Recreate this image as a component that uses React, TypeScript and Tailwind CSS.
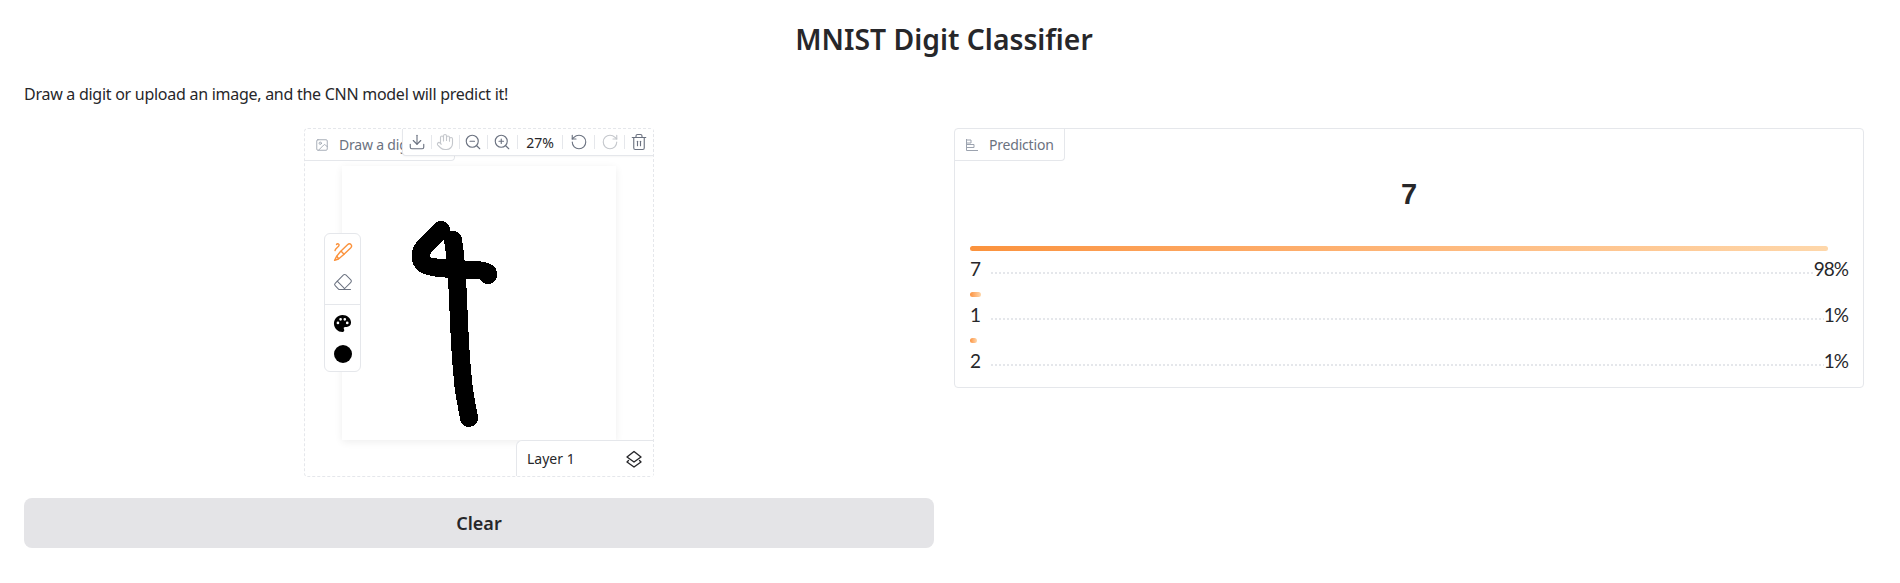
import { Download, Eraser, Hand, Image, RotateCcw, RotateCw, Trash2, ZoomIn, ZoomOut } from 'lucide-react'

const FONT = "font-['Noto_Sans',sans-serif]"

const predictions = [
  { label: '7', percent: '98%', barWidth: 858 },
  { label: '1', percent: '1%', barWidth: 11 },
  { label: '2', percent: '1%', barWidth: 7 },
]

function BrushIcon() {
  return (
    <svg viewBox="0 0 20 20" className="h-[20px] w-[20px]" fill="none" stroke="#fb923c" strokeWidth="1.4" strokeLinecap="round" strokeLinejoin="round">
      <path d="M3.5 2.5 C4.5 1 6.5 2 6 3.5 C5.5 5 2.5 6.5 2 8.5" />
      <path d="M8 9 L14.5 2.8 C15.8 1.6 17.2 1.8 18 2.6 C18.8 3.5 18.8 4.8 17.6 6 L11 12.2 Z" />
      <path d="M7.5 9.5 L3.5 14.5 L1.6 18.4 L5.5 17 L10.8 12.5" />
      <path d="M4 14.5 L5.5 16.5" />
    </svg>
  )
}

function PaletteIcon() {
  return (
    <svg viewBox="0 0 20 20" className="h-[19px] w-[19px]">
      <path
        fill="#000"
        fillRule="evenodd"
        d="M10 1 C15 1 19 4.5 19 9 C19 12 16.7 13.6 14.5 13.6 L12.8 13.6 C11.6 13.6 11 14.5 11.4 15.4 C11.9 16.6 12 17.2 11.6 18 C11.2 18.8 10.6 19 10 19 C5 19 1 15 1 10 C1 5 5 1 10 1 Z M5.2 8 A1.4 1.4 0 1 0 5.2 10.8 A1.4 1.4 0 1 0 5.2 8 Z M8 4.2 A1.4 1.4 0 1 0 8 7 A1.4 1.4 0 1 0 8 4.2 Z M12.4 4.2 A1.4 1.4 0 1 0 12.4 7 A1.4 1.4 0 1 0 12.4 4.2 Z M15 8 A1.4 1.4 0 1 0 15 10.8 A1.4 1.4 0 1 0 15 8 Z"
      />
    </svg>
  )
}

function LayersIcon() {
  return (
    <svg viewBox="0 0 18 18" className="h-[18px] w-[18px]" fill="none" stroke="#27272a" strokeWidth="1.4" strokeLinecap="round" strokeLinejoin="round">
      <path d="M9 1.5 L16 7 L9 12 L2 7 Z" />
      <path d="M3.5 10.5 L2 12 L9 17 L16 12 L14.5 10.5" />
    </svg>
  )
}

function Digit() {
  // hand drawn stroke, page offset 342,166
  return (
    <svg viewBox="0 0 274 274" className="h-full w-full" fill="none" stroke="#000" strokeWidth="18" strokeLinecap="round" strokeLinejoin="round" shapeRendering="crispEdges">
      <path d="M99 64 L85 78 C78 84 77 92 81 97 C85 101 95 102 110 103 L135 104 C143 105 147 106 146 109" />
      <path d="M111 74 C113 85 114 100 115 111 L118 177 C119 195 120 205 121 215 C122 228 125 240 127 252" />
    </svg>
  )
}

function Editor() {
  return (
    <div className="relative h-[349px] w-[350px] rounded-[4px] border border-dashed border-[#e5e7eb] bg-white">
      <div className="flex h-[32px] w-[150px] items-center gap-[10px] rounded-br-[4px] border-r border-b border-[#e5e7eb] pl-[10px] text-[14px] tracking-[-0.2px] text-[#6b7280]">
        <Image size={14} strokeWidth={1.5} className="text-[#9ca3af]" />
        <span className="whitespace-nowrap">Draw a digit</span>
      </div>

      {/* canvas */}
      <div className="absolute top-[37px] left-[37px] h-[274px] w-[274px] bg-white shadow-[0_2px_8px_rgba(0,0,0,0.07)]">
        <Digit />
      </div>

      {/* top toolbar */}
      <div className="absolute top-0 right-0 flex h-[27px] w-[251px] items-center rounded-bl-[4px] border-b border-l border-[#e5e7eb] bg-white text-[#6b7280] shadow-[0_1px_2px_rgba(0,0,0,0.04)] [&>div]:flex [&>div]:h-[14px] [&>div]:items-center [&>div]:justify-center [&>div]:border-r [&>div]:border-[#e5e7eb]">
        <div className="w-[29px]"><Download size={18} strokeWidth={1.5} /></div>
        <div className="w-[28px]"><Hand size={18} strokeWidth={1.5} className="text-[#c4c7cc]" /></div>
        <div className="w-[28px]"><ZoomOut size={18} strokeWidth={1.5} /></div>
        <div className="w-[30px]"><ZoomIn size={18} strokeWidth={1.5} /></div>
        <div className="w-[46px] text-[14px] text-[#27272a]">27%</div>
        <div className="w-[32px]"><RotateCcw size={18} strokeWidth={1.5} /></div>
        <div className="w-[30px]"><RotateCw size={18} strokeWidth={1.5} className="text-[#c4c7cc]" /></div>
        <div className="w-[28px] !border-r-0"><Trash2 size={18} strokeWidth={1.5} /></div>
      </div>

      {/* tools */}
      <div className="absolute top-[104px] left-[19px] flex w-[37px] flex-col items-center rounded-[6px] border border-[#e5e7eb] bg-white">
        <div className="flex h-[70px] flex-col items-center justify-center gap-[10px] pb-[4px]">
          <BrushIcon />
          <Eraser size={20} strokeWidth={1.25} className="text-[#6b7280]" />
        </div>
        <div className="flex h-[67px] w-full flex-col items-center justify-center gap-[12px] border-t border-[#e5e7eb]">
          <PaletteIcon />
          <span className="h-[18px] w-[18px] rounded-full bg-black" />
        </div>
      </div>

      {/* layers */}
      <div className="absolute right-0 bottom-0 flex h-[36px] w-[137px] items-center justify-between rounded-tl-[6px] border-t border-l border-[#e5e7eb] bg-white pr-[10px] pl-[10px] text-[14px] text-[#27272a]">
        <span>Layer 1</span>
        <LayersIcon />
      </div>
    </div>
  )
}

function Prediction() {
  return (
    <div className="h-[260px] rounded-[4px] border border-[#e5e7eb] bg-white">
      <div className="flex h-[32px] w-[110px] items-center gap-[10px] rounded-br-[4px] border-r border-b border-[#e5e7eb] pl-[10px] text-[14px] tracking-[-0.2px] text-[#6b7280]">
        <svg viewBox="0 0 14 14" className="h-[14px] w-[14px]" fill="none" stroke="#9ca3af" strokeWidth="1">
          <path d="M1.5 1 V12.5 H13" />
          <path d="M1.5 2 H6 V5 H1.5 M1.5 6.5 H9 V9.5 H1.5" />
        </svg>
        <span>Prediction</span>
      </div>
      <div className="flex h-[68px] items-center justify-center font-['Liberation_Sans',sans-serif] text-[29px] font-semibold text-[#27272a]">
        7
      </div>
      <div className="flex flex-col gap-[16px] px-[15px] pt-[17px]">
        {predictions.map((p) => (
          <div key={p.label} className="h-[30px]">
            <div
              className="h-[5px] rounded-[3px] bg-gradient-to-r from-[#fb923c] to-[#fed7aa]"
              style={{ width: p.barWidth }}
            />
            <div className="flex h-[25px] items-end font-['Lato',sans-serif] text-[19px] leading-[25px] text-[#27272a]">
              <span className="w-[21px] translate-y-[5px]">{p.label}</span>
              <span className="mb-[2px] h-[2px] flex-1 bg-[repeating-linear-gradient(to_right,#e5e7eb_0_2px,transparent_2px_4px)]" />
              <span className="translate-y-[5px] tracking-[-1px]">{p.percent}</span>
            </div>
          </div>
        ))}
      </div>
    </div>
  )
}

export default function App() {
  return (
    <div className={`${FONT} h-[583px] w-[1900px] overflow-hidden bg-white pr-[36px] pl-6 text-[#27272a]`}>
      <h1 className="pt-[21px] text-center text-[28.3px] leading-[36px] font-semibold">MNIST Digit Classifier</h1>
      <p className="mt-[25px] text-[16px] leading-[24px] tracking-[-0.27px]">Draw a digit or upload an image, and the CNN model will predict it!</p>
      <div className="mt-[22px] grid grid-cols-2 gap-[20px]">
        <div className="flex flex-col items-center">
          <Editor />
          <button className="mt-[21px] h-[50px] w-full rounded-[8px] bg-[#e4e4e7] text-[18px] font-semibold text-[#27272a]">
            Clear
          </button>
        </div>
        <Prediction />
      </div>
    </div>
  )
}
